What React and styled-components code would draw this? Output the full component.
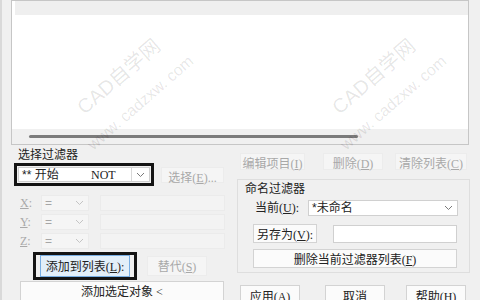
import React from "react";
import styled, { createGlobalStyle } from "styled-components";

const Global = createGlobalStyle`
  html, body {
    margin: 0;
    padding: 0;
    background: #f0f0f0;
  }
  body {
    font-family: "Liberation Serif", "Noto Sans CJK SC", serif;
    font-size: 12px;
    color: #222;
  }
`;

const Dialog = styled.div`
  position: relative;
  width: 480px;
  height: 300px;
  overflow: hidden;
  background: #f0f0f0;
  box-shadow: inset 2px 0 0 #d9d9d9;
`;

const ListBox = styled.div`
  margin-left: 11px;
  width: 458px;
  height: 145px;
  box-sizing: border-box;
  border: 1px solid #c6c6c6;
  background: #fff;
  display: flex;
  flex-direction: column;
`;

const ListHeader = styled.div`
  height: 14px;
  margin-left: 3px;
  background: #efefef;
`;

const ListBody = styled.div`
  flex: 1;
`;

const HScroll = styled.div`
  height: 15px;
  background: #f0f0f0;
  display: flex;
  align-items: center;
  padding-left: 17px;
`;

const Thumb = styled.div`
  width: 329px;
  height: 3px;
  border-radius: 2px;
  background: #7b7b7b;
`;

const Lower = styled.div`
  display: grid;
  grid-template-columns: 226px 233px;
  padding-left: 11px;
`;

const Column = styled.div`
  display: flex;
  flex-direction: column;
`;

const Caption = styled.div`
  margin-top: ${(p) => p.$mt || 0}px;
  padding-left: ${(p) => p.$pl || 0}px;
  line-height: ${(p) => p.$lh || 16}px;
  height: ${(p) => p.$lh || 16}px;
  white-space: nowrap;
`;

const Row = styled.div`
  display: flex;
  align-items: center;
  margin-top: ${(p) => p.$mt || 0}px;
  padding-left: ${(p) => p.$pl || 0}px;
  gap: ${(p) => p.$gap || 0}px;
`;

const Focus = styled.div`
  box-sizing: border-box;
  width: ${(p) => p.$w}px;
  height: ${(p) => p.$h}px;
  border: 3px solid #141414;
  padding: ${(p) => p.$pad || "1px"};
  display: flex;
  align-items: center;
`;

const Combo = styled.div`
  box-sizing: border-box;
  width: ${(p) => p.$w}px;
  height: ${(p) => p.$h}px;
  border: 1px solid ${(p) => (p.$disabled ? "#ebebeb" : "#d0d0d0")};
  background: ${(p) => (p.$disabled ? "#f5f5f5" : "#fff")};
  color: ${(p) => (p.$disabled ? "#a6a6a6" : "#222")};
  display: flex;
  align-items: center;
  font-family: "Liberation Sans", "Noto Sans CJK SC", sans-serif;
`;

const ComboValue = styled.div`
  flex: 1;
  padding-left: 3px;
  display: flex;
  align-items: center;
  white-space: nowrap;
  line-height: 12px;
`;

const ValuePart = styled.span`
  display: inline-block;
  width: ${(p) => p.$w}px;
  font-family: ${(p) => (p.$serif ? '"Liberation Serif", "Noto Sans CJK SC", serif' : "inherit")};
`;

const ComboSep = styled.div`
  width: 1px;
  align-self: stretch;
  background: #d8d8d8;
`;

const ComboArrow = styled.div`
  width: ${(p) => p.$w || 16}px;
  display: flex;
  align-items: center;
  justify-content: center;
`;

const Field = styled.div`
  box-sizing: border-box;
  width: ${(p) => p.$w}px;
  height: ${(p) => p.$h}px;
  border: 1px solid ${(p) => (p.$disabled ? "#ebebeb" : "#d0d0d0")};
  background: ${(p) => (p.$disabled ? "#f3f3f3" : "#fff")};
`;

const AxisLabel = styled.div`
  width: 21px;
  color: #a9a9a9;
  line-height: 16px;
`;

const Btn = styled.button`
  box-sizing: border-box;
  width: ${(p) => p.$w}px;
  height: ${(p) => p.$h || 20}px;
  margin-left: ${(p) => p.$ml || 0}px;
  margin-top: ${(p) => p.$mt || 0}px;
  padding: 0;
  flex-shrink: 0;
  font-family: inherit;
  font-size: 12px;
  white-space: nowrap;
  border: 1px solid
    ${(p) => (p.$focus ? "#78aee3" : p.$disabled ? "#ececec" : "#d3d3d3")};
  background: ${(p) => (p.$focus ? "#e3eff9" : p.$disabled ? "#f5f5f5" : "#fbfbfb")};
  color: ${(p) => (p.$disabled ? "#a8a8a8" : "#222")};
`;

const Key = styled.span`
  text-decoration: underline;
  text-underline-offset: 1px;
`;

const GroupBox = styled.div`
  box-sizing: border-box;
  width: 233px;
  margin-top: 9px;
  border: 1px solid #dedede;
  padding-bottom: 4px;
  display: flex;
  flex-direction: column;
`;

const InlineLabel = styled.div`
  width: ${(p) => p.$w}px;
  line-height: 16px;
  white-space: nowrap;
`;

const ButtonBar = styled.div`
  display: flex;
  margin-top: 12px;
  padding-left: 3px;
`;

const Watermark = styled.div`
  position: absolute;
  left: ${(p) => p.$x}px;
  top: ${(p) => p.$y}px;
  font-family: "Liberation Sans", "Noto Sans CJK SC", sans-serif;
  font-size: ${(p) => p.$size}px;
  line-height: ${(p) => p.$size}px;
  color: rgba(0, 0, 0, 0.1);
  white-space: nowrap;
  transform-origin: left center;
  transform: rotate(-41deg);
  pointer-events: none;
`;

const Chevron = ({ color = "#7a7a7a" }) => (
  <svg width="9" height="6" viewBox="0 0 9 6">
    <polyline points="1,1 4.5,4.5 8,1" fill="none" stroke={color} strokeWidth="1" />
  </svg>
);

const AxisRow = ({ axis, mt }) => (
  <Row $mt={mt} $pl={9}>
    <AxisLabel>
      <Key>{axis}</Key>:
    </AxisLabel>
    <Combo $w={48} $h={16} $disabled>
      <ComboValue>=</ComboValue>
      <ComboArrow $w={18}>
        <Chevron color="#c4c4c4" />
      </ComboArrow>
    </Combo>
    <Field $w={125} $h={16} $disabled style={{ marginLeft: 11 }} />
  </Row>
);

export default function App() {
  return (
    <>
      <Global />
      <Dialog>
        <ListBox>
          <ListHeader />
          <ListBody />
          <HScroll>
            <Thumb />
          </HScroll>
        </ListBox>

        <Lower>
          <Column>
            <Caption $mt={2} $pl={7}>选择过滤器</Caption>
            <Row $pl={3}>
              <Focus $w={140} $h={23}>
                <Combo $w={132} $h={15}>
                  <ComboValue>
                    <ValuePart $w={69}>** 开始</ValuePart>
                    <ValuePart $serif>NOT</ValuePart>
                  </ComboValue>
                  <ComboSep />
                  <ComboArrow $w={17}>
                    <Chevron />
                  </ComboArrow>
                </Combo>
              </Focus>
              <Btn $w={63} $h={16} $ml={7} $disabled>
                选择(<Key>E</Key>)...
              </Btn>
            </Row>
            <AxisRow axis="X" mt={9} />
            <AxisRow axis="Y" mt={3} />
            <AxisRow axis="Z" mt={3} />
            <Row $mt={3} $pl={22}>
              <Focus $w={104} $h={28} $pad="0 4px">
                <Btn $w={90} $h={22} $focus>
                  添加到列表(<Key>L</Key>):
                </Btn>
              </Focus>
              <Btn $w={60} $h={20} $ml={10} $disabled>
                替代(<Key>S</Key>)
              </Btn>
            </Row>
            <Row $mt={1} $pl={9}>
              <Btn $w={204} $h={20}>
                添加选定对象 &lt;
              </Btn>
            </Row>
          </Column>

          <Column>
            <Row $mt={8} $pl={3}>
              <Btn $w={65} $h={17} $disabled>
                编辑项目(<Key>I</Key>)
              </Btn>
              <Btn $w={60} $h={17} $ml={18} $disabled>
                删除(<Key>D</Key>)
              </Btn>
              <Btn $w={72} $h={17} $ml={12} $disabled>
                清除列表(<Key>C</Key>)
              </Btn>
            </Row>
            <GroupBox>
              <Caption $mt={2} $pl={7} $lh={14}>命名过滤器</Caption>
              <Row $mt={4} $pl={17}>
                <InlineLabel $w={53}>
                  当前(<Key>U</Key>):
                </InlineLabel>
                <Combo $w={150} $h={16}>
                  <ComboValue>*未命名</ComboValue>
                  <ComboArrow $w={18}>
                    <Chevron />
                  </ComboArrow>
                </Combo>
              </Row>
              <Row $mt={8} $pl={15}>
                <Btn $w={64} $h={19}>
                  另存为(<Key>V</Key>):
                </Btn>
                <Field $w={124} $h={18} style={{ marginLeft: 16 }} />
              </Row>
              <Row $mt={6} $pl={15}>
                <Btn $w={204} $h={19}>
                  删除当前过滤器列表(<Key>F</Key>)
                </Btn>
              </Row>
            </GroupBox>
            <ButtonBar>
              <Btn $w={60} $h={21}>
                应用(<Key>A</Key>)
              </Btn>
              <Btn $w={60} $h={21} $ml={25}>
                取消
              </Btn>
              <Btn $w={60} $h={21} $ml={21}>
                帮助(<Key>H</Key>)
              </Btn>
            </ButtonBar>
          </Column>
        </Lower>

        <Watermark $x={80} $y={100} $size={20}>CAD自学网</Watermark>
        <Watermark $x={90} $y={139} $size={16}>www. cadzxw. com</Watermark>
        <Watermark $x={335} $y={100} $size={20}>CAD自学网</Watermark>
        <Watermark $x={343} $y={139} $size={16}>www. cadzxw. com</Watermark>
      </Dialog>
    </>
  );
}
